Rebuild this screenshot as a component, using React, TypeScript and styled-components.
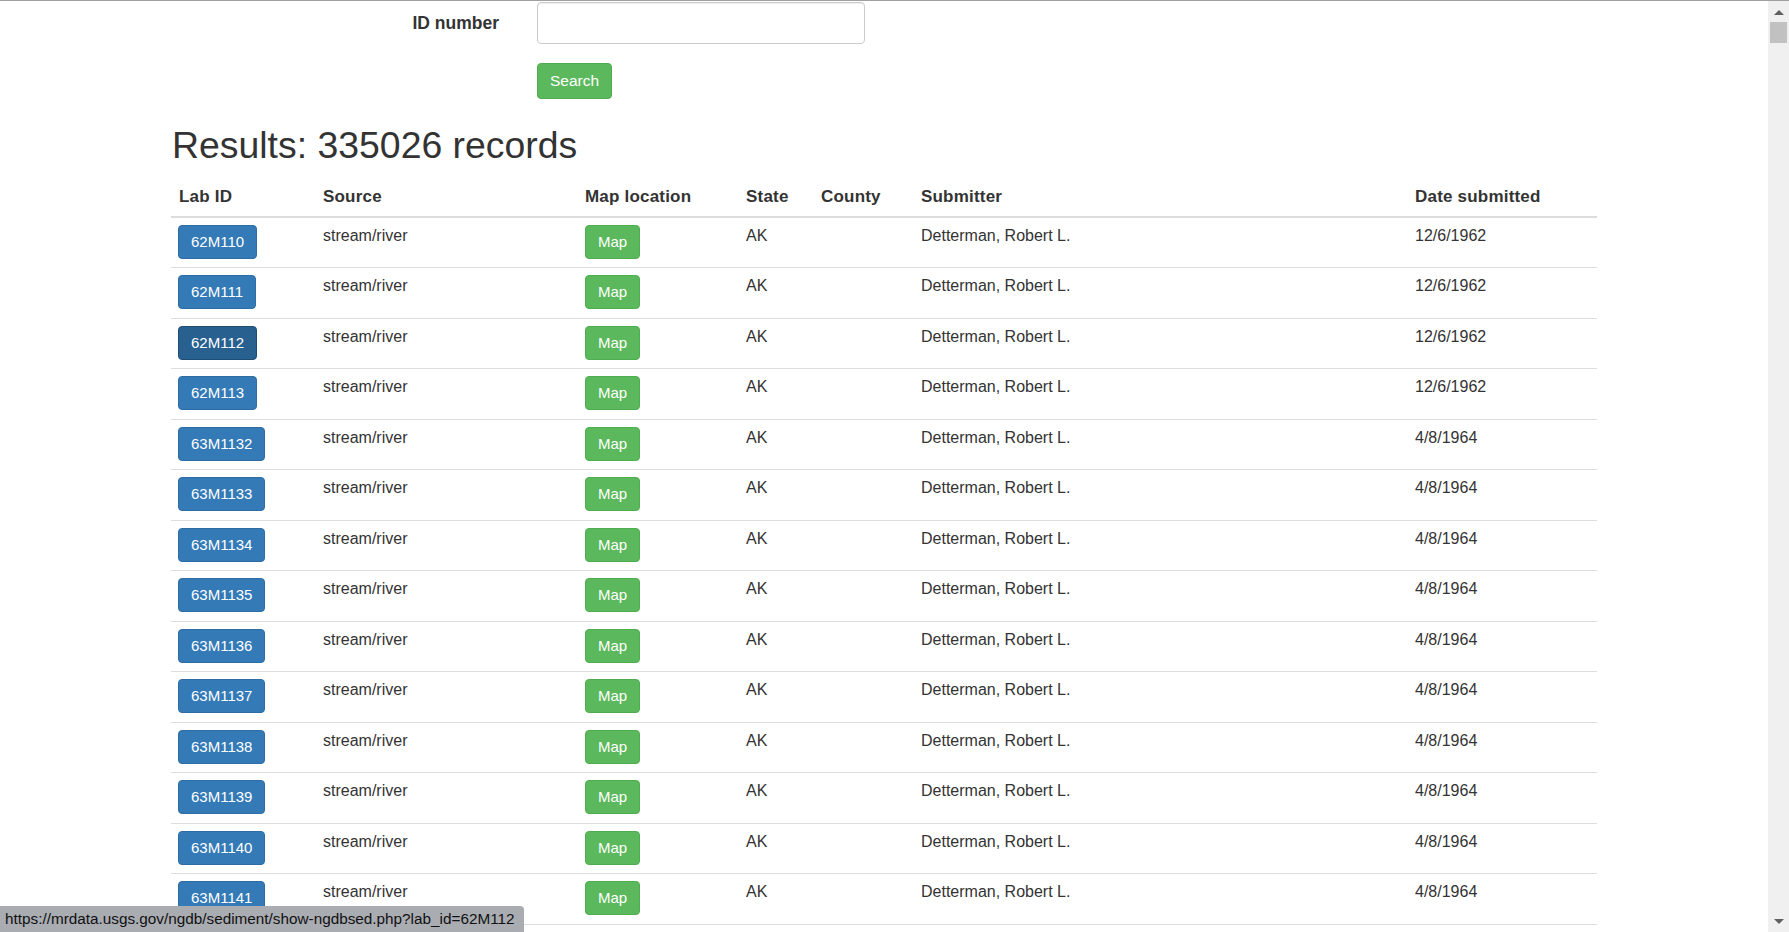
import React from 'react';
import styled, { createGlobalStyle, css } from 'styled-components';

const GlobalStyle = createGlobalStyle`
  * { box-sizing: border-box; }
  html, body { margin: 0; height: 100%; overflow: hidden; }
  body {
    font-family: "Liberation Sans", Arial, Helvetica, sans-serif;
    font-size: 16px;
    line-height: 1.42857;
    color: #333;
    background: #fff;
  }
`;

const Window = styled.div`
  height: 100vh;
  display: flex;
  flex-direction: column;
  border-top: 1px solid #a0a0a0;
`;

const Viewport = styled.div`
  flex: 1;
  min-height: 0;
  display: grid;
  grid-template-columns: 1fr 21px;
`;

const Main = styled.main`
  overflow: hidden;
`;

const Container = styled.div`
  width: 1426px;
  margin: 0 auto;
`;

const SearchForm = styled.form`
  display: grid;
  grid-template-columns: 328px 328px;
  column-gap: 38px;
  row-gap: 19px;
  padding-top: 1px;
`;

const Label = styled.label`
  text-align: right;
  font-weight: bold;
  font-size: 17.5px;
  line-height: 24px;
  padding-top: 9px;
`;

const Input = styled.input`
  height: 42px;
  width: 100%;
  border: 1px solid #ccc;
  border-radius: 4px;
  padding: 6px 12px;
  font: inherit;
  box-shadow: inset 0 1px 1px rgba(0, 0, 0, 0.075);
`;

const Btn = styled.button<{ $variant: 'primary' | 'success'; $active?: boolean; $size?: number }>`
  display: inline-block;
  padding: 6px 12px;
  font-family: inherit;
  font-size: ${(p) => p.$size ?? 15}px;
  line-height: ${(p) => (p.$size ? 1.42857 : '20px')};
  color: #fff;
  border: 1px solid;
  border-radius: 4px;
  cursor: pointer;
  white-space: nowrap;
  ${(p) =>
    p.$variant === 'success'
      ? css`
          background: #5cb85c;
          border-color: #4cae4c;
        `
      : p.$active
      ? css`
          background: #286090;
          border-color: #204d74;
        `
      : css`
          background: #337ab7;
          border-color: #2e6da4;
        `}
`;

const SearchCell = styled.div`
  grid-column: 2;
  justify-self: start;
`;

const Heading = styled.h1`
  font-size: 37.4px;
  font-weight: 500;
  line-height: 1.1;
  margin: 26px 0 11px 1px;
`;

const Table = styled.table`
  width: 100%;
  border-collapse: collapse;
  table-layout: fixed;
`;

const Th = styled.th`
  text-align: left;
  font-weight: bold;
  font-size: 17px;
  letter-spacing: 0.2px;
  padding: 8px 8px 6px;
  border-bottom: 2px solid #ddd;
  vertical-align: bottom;
`;

const Td = styled.td`
  padding: 7px 8px 8.5px 7px;
  border-top: 1px solid #ddd;
  vertical-align: top;

  & + & {
    padding-left: 8px;
  }
`;

const Rail = styled.div`
  background: #f0f0f0;
  display: flex;
  flex-direction: column;
`;

const RailButton = styled.div<{ $up?: boolean }>`
  height: 21px;
  display: flex;
  align-items: center;
  justify-content: center;
  padding-top: ${(p) => (p.$up ? 2 : 0)}px;
`;

const Thumb = styled.div`
  height: 21px;
  margin: 0 2px;
  background: #c1c1c1;
`;

const RailSpace = styled.div`
  flex: 1;
`;

const StatusBar = styled.div`
  position: fixed;
  left: 0;
  bottom: 0;
  height: 26px;
  padding: 0 9px 0 5px;
  font-size: 15.3px;
  line-height: 26px;
  color: #111;
  background: #a9acb1;
  border-top-right-radius: 4px;
`;

const widths = [144, 262, 161, 75, 100, 494, 190];
const headers = ['Lab ID', 'Source', 'Map location', 'State', 'County', 'Submitter', 'Date submitted'];

type Row = { id: string; date: string };

const rows: Row[] = [
  { id: '62M110', date: '12/6/1962' },
  { id: '62M111', date: '12/6/1962' },
  { id: '62M112', date: '12/6/1962' },
  { id: '62M113', date: '12/6/1962' },
];
for (let n = 1132; n <= 1143; n++) rows.push({ id: `63M${n}`, date: '4/8/1964' });

function Arrow({ up }: { up?: boolean }) {
  return (
    <svg width="10" height="5" viewBox="0 0 10 5">
      <path d={up ? 'M0 5 L5 0 L10 5 Z' : 'M0 0 L5 5 L10 0 Z'} fill="#606060" />
    </svg>
  );
}

export default function App() {
  return (
    <>
      <GlobalStyle />
      <Window>
        <Viewport>
          <Main>
            <Container>
              <SearchForm onSubmit={(e) => e.preventDefault()}>
                <Label htmlFor="lab_id">ID number</Label>
                <Input id="lab_id" type="text" />
                <SearchCell>
                  <Btn type="submit" $variant="success" $size={15.5}>
                    Search
                  </Btn>
                </SearchCell>
              </SearchForm>
              <Heading>Results: 335026 records</Heading>
              <Table>
                <colgroup>
                  {widths.map((w, i) => (
                    <col key={i} style={{ width: w }} />
                  ))}
                </colgroup>
                <thead>
                  <tr>
                    {headers.map((h) => (
                      <Th key={h}>{h}</Th>
                    ))}
                  </tr>
                </thead>
                <tbody>
                  {rows.map((r) => (
                    <tr key={r.id}>
                      <Td>
                        <Btn $variant="primary" $active={r.id === '62M112'}>
                          {r.id}
                        </Btn>
                      </Td>
                      <Td>stream/river</Td>
                      <Td>
                        <Btn $variant="success">Map</Btn>
                      </Td>
                      <Td>AK</Td>
                      <Td></Td>
                      <Td>Detterman, Robert L.</Td>
                      <Td>{r.date}</Td>
                    </tr>
                  ))}
                </tbody>
              </Table>
            </Container>
          </Main>
          <Rail>
            <RailButton $up>
              <Arrow up />
            </RailButton>
            <Thumb />
            <RailSpace />
            <RailButton>
              <Arrow />
            </RailButton>
          </Rail>
        </Viewport>
      </Window>
      <StatusBar>https://mrdata.usgs.gov/ngdb/sediment/show-ngdbsed.php?lab_id=62M112</StatusBar>
    </>
  );
}
